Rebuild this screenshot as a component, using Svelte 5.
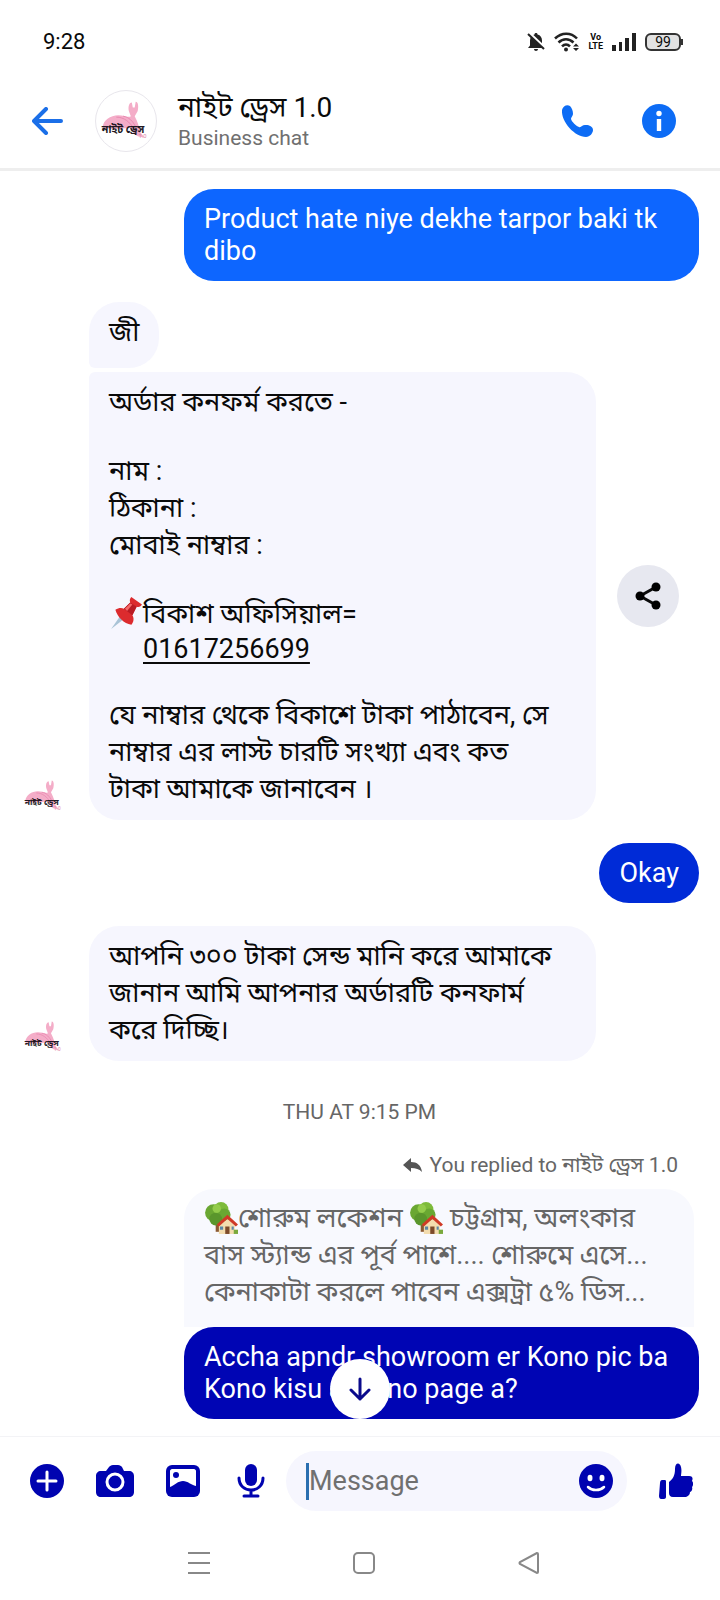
<script>
	const phone = "01617256699";

	let draft = "";
</script>

{#snippet logo()}
	<svg class="logo" viewBox="0 0 62 62" role="img" aria-label="নাইট ড্রেস 1.0">
		<path d="M7 38C7 30 15 25 23 25c6 0 11 3 13 1l-2-5c-1-4 0-9 3-9l1 5h2l1-6c3 0 3 6 2 10l-3 5c2 4 4 8 6 17l4 5-6-1c-5-2-6-6-9-9-9 1-19 2-28 0z" fill="#f4adc8" />
		<path d="M21 27c8 0 14 5 18 12M28 26c6 1 10 5 13 11" fill="none" stroke="#e888b0" stroke-width="1" />
		<text x="6" y="43" font-size="11" font-weight="700" fill="#221722">নাইট ড্রেস</text>
		<text x="44" y="49" font-size="6" fill="#dd85aa">1.0</text>
	</svg>
{/snippet}

{#snippet house()}
	<svg class="emoji" viewBox="0 0 32 32" role="img" aria-label="🏡">
		<path d="M11 15h4v14h-4z" fill="#8a5a33" />
		<circle cx="9" cy="11" r="8" fill="#6aa732" />
		<circle cx="16" cy="8" r="7" fill="#7dbb3a" />
		<circle cx="19" cy="13" r="6" fill="#69a832" />
		<circle cx="11" cy="17" r="6" fill="#5a962c" />
		<circle cx="12" cy="7" r="4" fill="#93cc4b" />
		<path d="M14 23l8-6 7 6v8H14z" fill="#f3dcae" />
		<path d="M22 13l10 9-2 2-8-7-8 7-2-2z" fill="#cf3a26" />
		<path d="M20 24h4v7h-4z" fill="#7c4a2a" />
		<path d="M15 24h3v3h-3zM26 24h2v3h-2z" fill="#5b86a6" />
		<path d="M28 27h4v4h-4z" fill="#7aa93c" />
	</svg>
{/snippet}

<div class="app">
	<div class="status">
		<span class="time">9:28</span>
		<svg width="18" height="20" viewBox="0 0 18 20" fill="#222">
			<path d="M9 1c1 0 1.500.6 1.500 1.400C13.500 3.200 15 5.500 15 8.500v5l2 2.500H1l2-2.500v-5C3 5.500 4.500 3.200 7.500 2.400 7.500 1.600 8 1 9 1zM7 17h4c0 1.200-.9 2-2 2s-2-.8-2-2z" />
			<path d="M1 0l17 16" stroke="#fff" stroke-width="3" />
			<path d="M1 2l16 15" stroke="#222" stroke-width="2" />
		</svg>
		<svg width="25" height="20" viewBox="0 0 25 20" fill="none" stroke="#222" stroke-width="2.500">
			<path d="M1 6.500c6.500-6.500 16-6.500 22 0M4.500 10.500c4.500-4.500 10.500-4.500 15 0M8 14.300c2.500-2.500 5.500-2.500 8 0" />
			<circle cx="12" cy="17.500" r="2" fill="#222" stroke="none" />
			<path d="M19 14.500l3-3 3 3zM19 16l3 3 3-3z" fill="#222" stroke="none" />
		</svg>
		<span class="volte"><span>Vo</span><span>LTE</span></span>
		<svg width="24" height="18" viewBox="0 0 24 18" fill="#222">
			<path d="M0 12h4v6H0zM7 9h3v9H7zM13 5h4v13h-4zM20 0h4v18h-4z" />
		</svg>
		<span class="battery">99</span>
	</div>

	<header>
		<button class="back" aria-label="Back">
			<svg width="32" height="28" viewBox="0 0 32 28" fill="none" stroke="#1b6fe8" stroke-width="4" stroke-linecap="round" stroke-linejoin="round">
				<path d="M29 14H3M14 2L2 14l12 12" />
			</svg>
		</button>
		<div class="avatar">{@render logo()}</div>
		<div class="who">
			<h1>নাইট ড্রেস 1.0</h1>
			<p>Business chat</p>
		</div>
		<button aria-label="Call">
			<svg width="34" height="34" viewBox="0 0 34 34" fill="#0d6cf5">
				<path d="M2 6C3 2 7 0 10 2c2 2 3 5 3 8 0 2-2 3-2 5 1 3 5 7 8 8 2 1 3-2 6-2 3-.500 8 1 8 5 0 3-3 7-7 7C15 33 1 18 2 6z" />
			</svg>
		</button>
		<button aria-label="Info">
			<svg width="34" height="34" viewBox="0 0 34 34">
				<circle cx="17" cy="17" r="17" fill="#0d6cf5" />
				<circle cx="17" cy="9.500" r="2.700" fill="#fff" />
				<path d="M14.800 15h4.400v12h-4.400z" fill="#fff" />
			</svg>
		</button>
	</header>

	<main>
		<div class="bubble mine first">Product hate niye dekhe tarpor baki tk dibo</div>

		<div class="bubble theirs top">জী</div>

		<div class="row">
			<div class="small">{@render logo()}</div>
			<div class="bubble theirs bottom">
				<p>অর্ডার কনফর্ম করতে -</p>
				<p class="gap">নাম :<br />ঠিকানা :<br />মোবাই নাম্বার :</p>
				<div class="pinned gap">
					<svg class="emoji" viewBox="0 0 32 32" role="img" aria-label="📌">
						<path d="M2 31l9-13 4 3z" fill="#a9c3d6" />
						<path d="M6 13c3-2 6-2 8-1l6-6c-1-2 0-4 1-5l10 7c-1 2-3 3-5 2l-4 8c2 3 1 7-1 9C14 26 8 20 6 13z" fill="#dc2b2e" />
						<path d="M14 12l6-6 6 4-4 8z" fill="#b81b24" />
						<path d="M15 12l5-5 2 1-5 6z" fill="#f4696a" />
					</svg>
					<p>বিকাশ অফিসিয়াল=<a href="tel:{phone}">{phone}</a></p>
				</div>
				<p class="gap">যে নাম্বার থেকে বিকাশে টাকা পাঠাবেন, সে নাম্বার এর লাস্ট চারটি সংখ্যা এবং কত টাকা আমাকে জানাবেন ।</p>
			</div>
			<button class="share" aria-label="Share">
				<svg width="26" height="28" viewBox="0 0 26 28">
					<path d="M21 5L5 14l16 9" fill="none" stroke="#0a0a0a" stroke-width="3" />
					<circle cx="21" cy="5" r="4.500" /><circle cx="5" cy="14" r="4.500" /><circle cx="21" cy="23" r="4.500" />
				</svg>
			</button>
		</div>

		<div class="bubble mine okay">Okay</div>

		<div class="row">
			<div class="small">{@render logo()}</div>
			<div class="bubble theirs">আপনি ৩০০ টাকা সেন্ড মানি করে আমাকে জানান আমি আপনার অর্ডারটি কনফার্ম করে দিচ্ছি।</div>
		</div>

		<p class="date">THU AT 9:15 PM</p>

		<p class="replied">
			<svg width="19" height="14" viewBox="0 0 19 14" fill="#555">
				<path d="M0 7l8-7v4c6 0 10 3 11 10-3-3-6-4-11-4v4z" />
			</svg>
			You replied to নাইট ড্রেস 1.0
		</p>
		<div class="quote">
			<p>{@render house()}শোরুম লকেশন {@render house()} চট্টগ্রাম, অলংকার</p>
			<p>বাস স্ট্যান্ড এর পূর্ব পাশে.... শোরুমে এসে...</p>
			<p>কেনাকাটা করলে পাবেন এক্সট্রা ৫% ডিস...</p>
		</div>
		<div class="bubble mine last">Accha apndr showroom er Kono pic ba Kono kisu asi Kno page a?</div>
		<button class="down" aria-label="Scroll to latest">
			<svg width="22" height="24" viewBox="0 0 22 24" fill="none" stroke="#0a0a8c" stroke-width="3" stroke-linecap="round" stroke-linejoin="round">
				<path d="M11 2v20M2 13l9 9 9-9" />
			</svg>
		</button>
	</main>

	<footer>
		<div class="tools">
			<button aria-label="More">
				<svg width="34" height="34" viewBox="0 0 34 34">
					<circle cx="17" cy="17" r="17" fill="#0003b0" />
					<path d="M17 8v18M8 17h18" stroke="#fff" stroke-width="3" stroke-linecap="round" />
				</svg>
			</button>
			<button aria-label="Camera">
				<svg width="38" height="32" viewBox="0 0 38 32">
					<path d="M5 6h5l3-4c1-1 2-2 4-2h5c2 0 3 1 4 2l2 4h5c3 0 5 2 5 5v16c0 3-2 5-5 5H5c-3 0-5-2-5-5V11c0-3 2-5 5-5z" fill="#0003b0" />
					<circle cx="19" cy="17" r="8" fill="none" stroke="#fff" stroke-width="3" />
				</svg>
			</button>
			<button aria-label="Gallery">
				<svg width="34" height="32" viewBox="0 0 34 32">
					<rect x="0" y="0" width="34" height="32" rx="6" fill="#0003b0" />
					<path d="M6 4h22c1 0 2 1 2 2v15c-5-1-8-5-13-5S9 20 4 22V6c0-1 1-2 2-2z" fill="#fff" />
					<circle cx="10" cy="10" r="3" fill="#0003b0" />
				</svg>
			</button>
			<button aria-label="Voice">
				<svg width="28" height="34" viewBox="0 0 28 34">
					<rect x="8" y="0" width="12" height="22" rx="6" fill="#0003b0" />
					<path d="M2 14c0 16 24 16 24 0M14 26v5M7 32h14" fill="none" stroke="#0003b0" stroke-width="3" stroke-linecap="round" />
				</svg>
			</button>
		</div>
		<div class="field">
			<span class="caret"></span>
			<input type="text" placeholder="Message" aria-label="Message" bind:value={draft} />
			<button aria-label="Emoji">
				<svg width="34" height="34" viewBox="0 0 34 34">
					<circle cx="17" cy="17" r="17" fill="#0003b0" />
					<ellipse cx="11" cy="14" rx="2.500" ry="3.200" fill="#fff" /><ellipse cx="23" cy="14" rx="2.500" ry="3.200" fill="#fff" />
					<path d="M9 23c4 4 12 4 16 0" fill="none" stroke="#fff" stroke-width="2.500" stroke-linecap="round" />
				</svg>
			</button>
		</div>
		<button class="like" aria-label="Like">
			<svg width="34" height="36" viewBox="0 0 34 36" fill="#0003b0">
				<path d="M3 17h3c1 0 1 1 1 2v15c0 1-1 2-2 2H2c-1 0-2-1-2-3l1-13c0-2 1-3 2-3z" />
				<path d="M10 19c4-3 6-7 6-13 0-7 5-7 6-2 1 4 0 7 0 9h8c4 0 4 3 3 5 2 2 1 5 0 6 1 3-1 5-2 5 0 3-2 4-4 5H14c-3 0-4-2-4-4z" />
			</svg>
		</button>
	</footer>

	<nav>
		<button aria-label="Recents"><svg width="22" height="22" viewBox="0 0 22 22"><path d="M0 1h22M0 11h22M0 21h22" /></svg></button>
		<button aria-label="Home"><svg width="22" height="22" viewBox="0 0 22 22"><rect x="1" y="1" width="20" height="20" rx="4" /></svg></button>
		<button aria-label="Back"><svg width="22" height="22" viewBox="0 0 22 22"><path d="M19 1L2 10q-1 1 0 2l17 9q1 0 1-1V2q0-1-1-1z" /></svg></button>
	</nav>
</div>

<style>
	:global(body) {
		margin: 0;
		background: #fff;
	}

	.app {
		font-family: Roboto, "Noto Sans Bengali", "Noto Sans", sans-serif;
		font-size: 27px;
		line-height: 32px;
		color: #0a0a0a;
	}

	p, h1 {
		margin: 0;
	}

	svg {
		display: block;
		flex: none;
	}

	button {
		display: flex;
		align-items: center;
		justify-content: center;
		flex: none;
		padding: 0;
		border: 0;
		background: none;
	}

	.status {
		display: flex;
		align-items: center;
		gap: 9px;
		height: 24px;
		padding: 30px 39px 20px 43px;
	}

	.time {
		flex: 1;
		font-size: 22px;
	}

	.volte {
		display: flex;
		flex-direction: column;
		font-family: "Liberation Sans Narrow", Roboto, sans-serif;
		font-size: 9px;
		line-height: 9px;
		font-weight: 700;
		text-align: center;
	}

	.battery {
		position: relative;
		box-sizing: border-box;
		width: 36px;
		border: 2px solid #333;
		border-radius: 6px;
		background: #e2e2e2;
		font-size: 14px;
		line-height: 14px;
		text-align: center;
	}

	.battery::after {
		content: "";
		position: absolute;
		right: -4px;
		top: 4px;
		width: 2px;
		height: 6px;
		background: #333;
	}

	header {
		display: flex;
		align-items: center;
		padding: 16px 44px 16px 32px;
		border-bottom: 3px solid #eee;
	}

	.back {
		margin-right: 31px;
	}

	.avatar {
		box-sizing: border-box;
		width: 62px;
		height: 62px;
		margin-right: 21px;
		border: 1px solid #e8e6ec;
		border-radius: 50%;
	}

	.logo {
		width: 100%;
		height: 100%;
	}

	.who {
		flex: 1;
		padding-top: 2px;
	}

	h1 {
		font-size: 28px;
		line-height: 32px;
		font-weight: 400;
	}

	.who p {
		font-size: 21px;
		line-height: 28px;
		color: #707070;
	}

	header button + button {
		margin-left: 48px;
	}

	main {
		position: relative;
		display: flex;
		flex-direction: column;
		padding: 18px 21px 17px 20px;
	}

	.bubble {
		box-sizing: border-box;
		padding: 14px 20px;
		border-radius: 30px;
	}

	.mine {
		align-self: flex-end;
		max-width: 515px;
		color: #fff;
	}

	.first {
		background: #0d66ff;
	}

	.okay {
		margin: 23px 0;
		background: #002bd7;
	}

	.last {
		background: #0005b4;
	}

	.theirs {
		max-width: 507px;
		padding: 12px 36px 12px 20px;
		background: #f6f6fe;
		line-height: 37px;
	}

	.top {
		align-self: flex-start;
		margin: 21px 0 4px 69px;
		padding: 12px 20px 17px;
		border-bottom-left-radius: 6px;
	}

	.bottom {
		border-top-left-radius: 6px;
	}

	.row {
		display: flex;
		align-items: flex-end;
		gap: 21px;
	}

	.small {
		flex: none;
		width: 48px;
		height: 48px;
	}

	.gap {
		margin-top: 32px;
	}

	.pinned {
		display: flex;
		width: 280px;
	}

	.pinned a {
		display: block;
		line-height: 32px;
		color: inherit;
		text-underline-offset: 4px;
	}

	.emoji {
		display: inline-block;
		width: 34px;
		height: 34px;
		vertical-align: -8px;
	}

	.share {
		align-self: center;
		width: 62px;
		height: 62px;
		border-radius: 50%;
		background: #e7e8f0;
	}

	.date {
		margin-top: 35px;
		font-size: 21px;
		text-align: center;
		color: #666;
	}

	.replied {
		display: flex;
		align-items: center;
		justify-content: flex-end;
		gap: 8px;
		margin: 21px 21px 8px 0;
		font-size: 21px;
		color: #666;
	}

	.quote {
		align-self: flex-end;
		box-sizing: border-box;
		width: 510px;
		margin-right: 5px;
		padding: 11px 20px 16px;
		border-radius: 30px 30px 0 0;
		background: #f8f9fe;
		line-height: 37px;
		color: #666;
		white-space: nowrap;
	}

	.down {
		position: absolute;
		left: calc(50% - 30px);
		bottom: 17px;
		width: 60px;
		height: 60px;
		border-radius: 50%;
		background: #fff;
	}

	footer {
		display: flex;
		align-items: center;
		gap: 16px;
		padding: 14px 27px 14px 28px;
		border-top: 1px solid #f3f3f6;
	}

	.tools {
		display: flex;
		gap: 30px;
	}

	.tools button {
		width: 38px;
	}

	.field {
		flex: 1;
		display: flex;
		align-items: center;
		min-width: 0;
		height: 60px;
		padding: 0 14px 0 20px;
		border-radius: 30px;
		background: #f6f6fe;
	}

	.caret {
		width: 3px;
		height: 37px;
		background: #2a6fb0;
	}

	input {
		flex: 1;
		min-width: 0;
		padding: 0;
		border: 0;
		outline: 0;
		background: none;
		font: inherit;
	}

	input::placeholder {
		color: #707070;
		opacity: 1;
	}

	.like {
		margin-left: 16px;
	}

	nav {
		display: flex;
		justify-content: center;
		gap: 143px;
		padding: 27px 0 27px 8px;
	}

	nav svg {
		fill: none;
		stroke: #888;
		stroke-width: 2;
	}
</style>
